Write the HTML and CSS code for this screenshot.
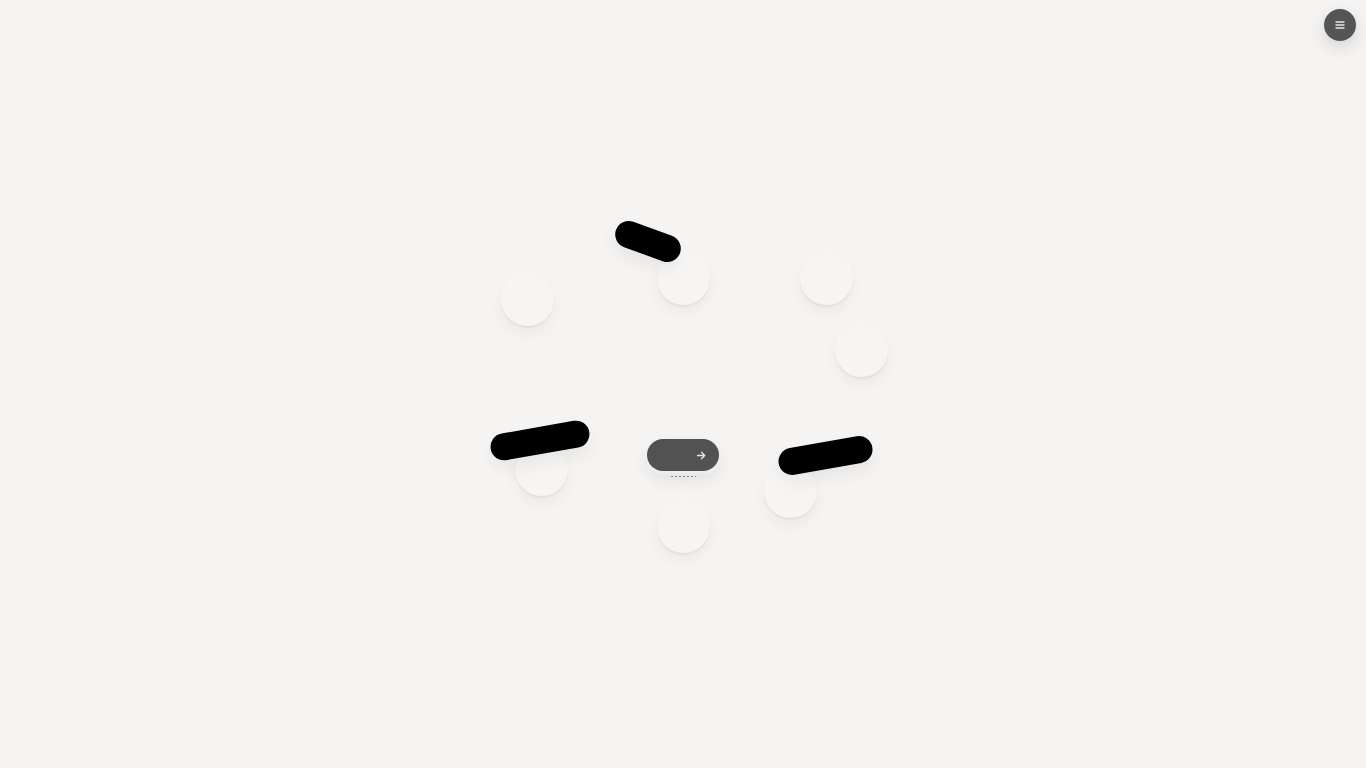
FILE: index.html
```html
<!DOCTYPE html>
<html lang="en">
<head>
<meta charset="utf-8">
<title>Orbit</title>
<link rel="stylesheet" href="styles.css">
</head>
<body>
<header class="topbar">
  <button class="menu-btn" aria-label="Menu">
    <svg width="10" height="8" viewBox="0 0 10 8"><path d="M0.5 1h9M0.5 4h9M0.5 7h9" stroke="#e6e6e6" stroke-width="1.3" fill="none"/></svg>
  </button>
</header>
<main class="stage">
  <span class="orb o1"></span>
  <span class="orb o2"></span>
  <span class="orb o3"></span>
  <span class="orb o4"></span>
  <span class="orb o5"></span>
  <span class="orb o6"></span>
  <span class="orb o7"></span>
  <span class="pill p1"></span>
  <span class="pill p2"></span>
  <span class="pill p3"></span>
  <div class="center">
    <button class="go-btn" aria-label="Continue">
      <svg width="9" height="9" viewBox="0 0 9 9"><path d="M0.5 4.5h7M4.5 1.3l3.2 3.2-3.2 3.2" stroke="#e8e8e8" stroke-width="1.3" fill="none" stroke-linecap="round" stroke-linejoin="round"/></svg>
    </button>
    <span class="dots"></span>
  </div>
</main>
</body>
</html>
```
FILE: styles.css
```css
html, body {
  margin: 0;
  padding: 0;
  height: 100%;
}
body {
  background: #f5f4f2;
  font-family: "Inter", "Liberation Sans", sans-serif;
  overflow: hidden;
  position: relative;
}
.topbar {
  display: flex;
  justify-content: flex-end;
  padding: 9px 10px 0 0;
  position: relative;
  z-index: 2;
}
.menu-btn {
  width: 32px;
  height: 32px;
  border-radius: 50%;
  border: none;
  background: #555555;
  display: flex;
  align-items: center;
  justify-content: center;
  padding: 0;
  box-shadow: 0 6px 18px rgba(0,0,0,0.13);
}
.stage {
  position: absolute;
  inset: 0;
}
.orb {
  position: absolute;
  width: 53px;
  height: 53px;
  margin: -26.5px 0 0 -26.5px;
  border-radius: 50%;
  background: #f6f5f3;
  box-shadow: 0 2px 2px rgba(0,0,0,0.05), 0 8px 16px rgba(0,0,0,0.045);
}
.o1 { left: 683px; top: 278px; }
.o2 { left: 826px; top: 278px; }
.o3 { left: 861px; top: 350px; }
.o4 { left: 790px; top: 491px; }
.o5 { left: 683px; top: 526px; }
.o6 { left: 541px; top: 469px; }
.o7 { left: 527px; top: 299px; }
.pill {
  position: absolute;
  background: #000;
  border-radius: 14px;
  box-shadow: 0 8px 18px rgba(0,0,0,0.06);
}
.p1 {
  width: 68px;
  height: 27px;
  left: 614px;
  top: 228px;
  transform: rotate(20deg);
}
.p2 {
  width: 100px;
  height: 27px;
  left: 490px;
  top: 427px;
  transform: rotate(-10deg);
}
.p3 {
  width: 95px;
  height: 27px;
  left: 777.5px;
  top: 441.5px;
  transform: rotate(-10deg);
}
.center {
  position: absolute;
  left: 647px;
  top: 439px;
  width: 72px;
  display: flex;
  flex-direction: column;
  align-items: center;
  gap: 4px;
}
.go-btn {
  width: 72px;
  height: 32px;
  border: none;
  border-radius: 16px;
  background: #525252;
  display: flex;
  align-items: center;
  justify-content: flex-end;
  padding: 0 13px 0 0;
  box-shadow: 0 8px 18px rgba(0,0,0,0.09), 0 3px 3px rgba(255,255,255,0.9);
}
.dots {
  width: 26px;
  height: 1px;
  margin-top: 1px;
  background-image: radial-gradient(circle, #8a8a8a 0.6px, transparent 0.7px);
  background-size: 4px 1px;
}
```
